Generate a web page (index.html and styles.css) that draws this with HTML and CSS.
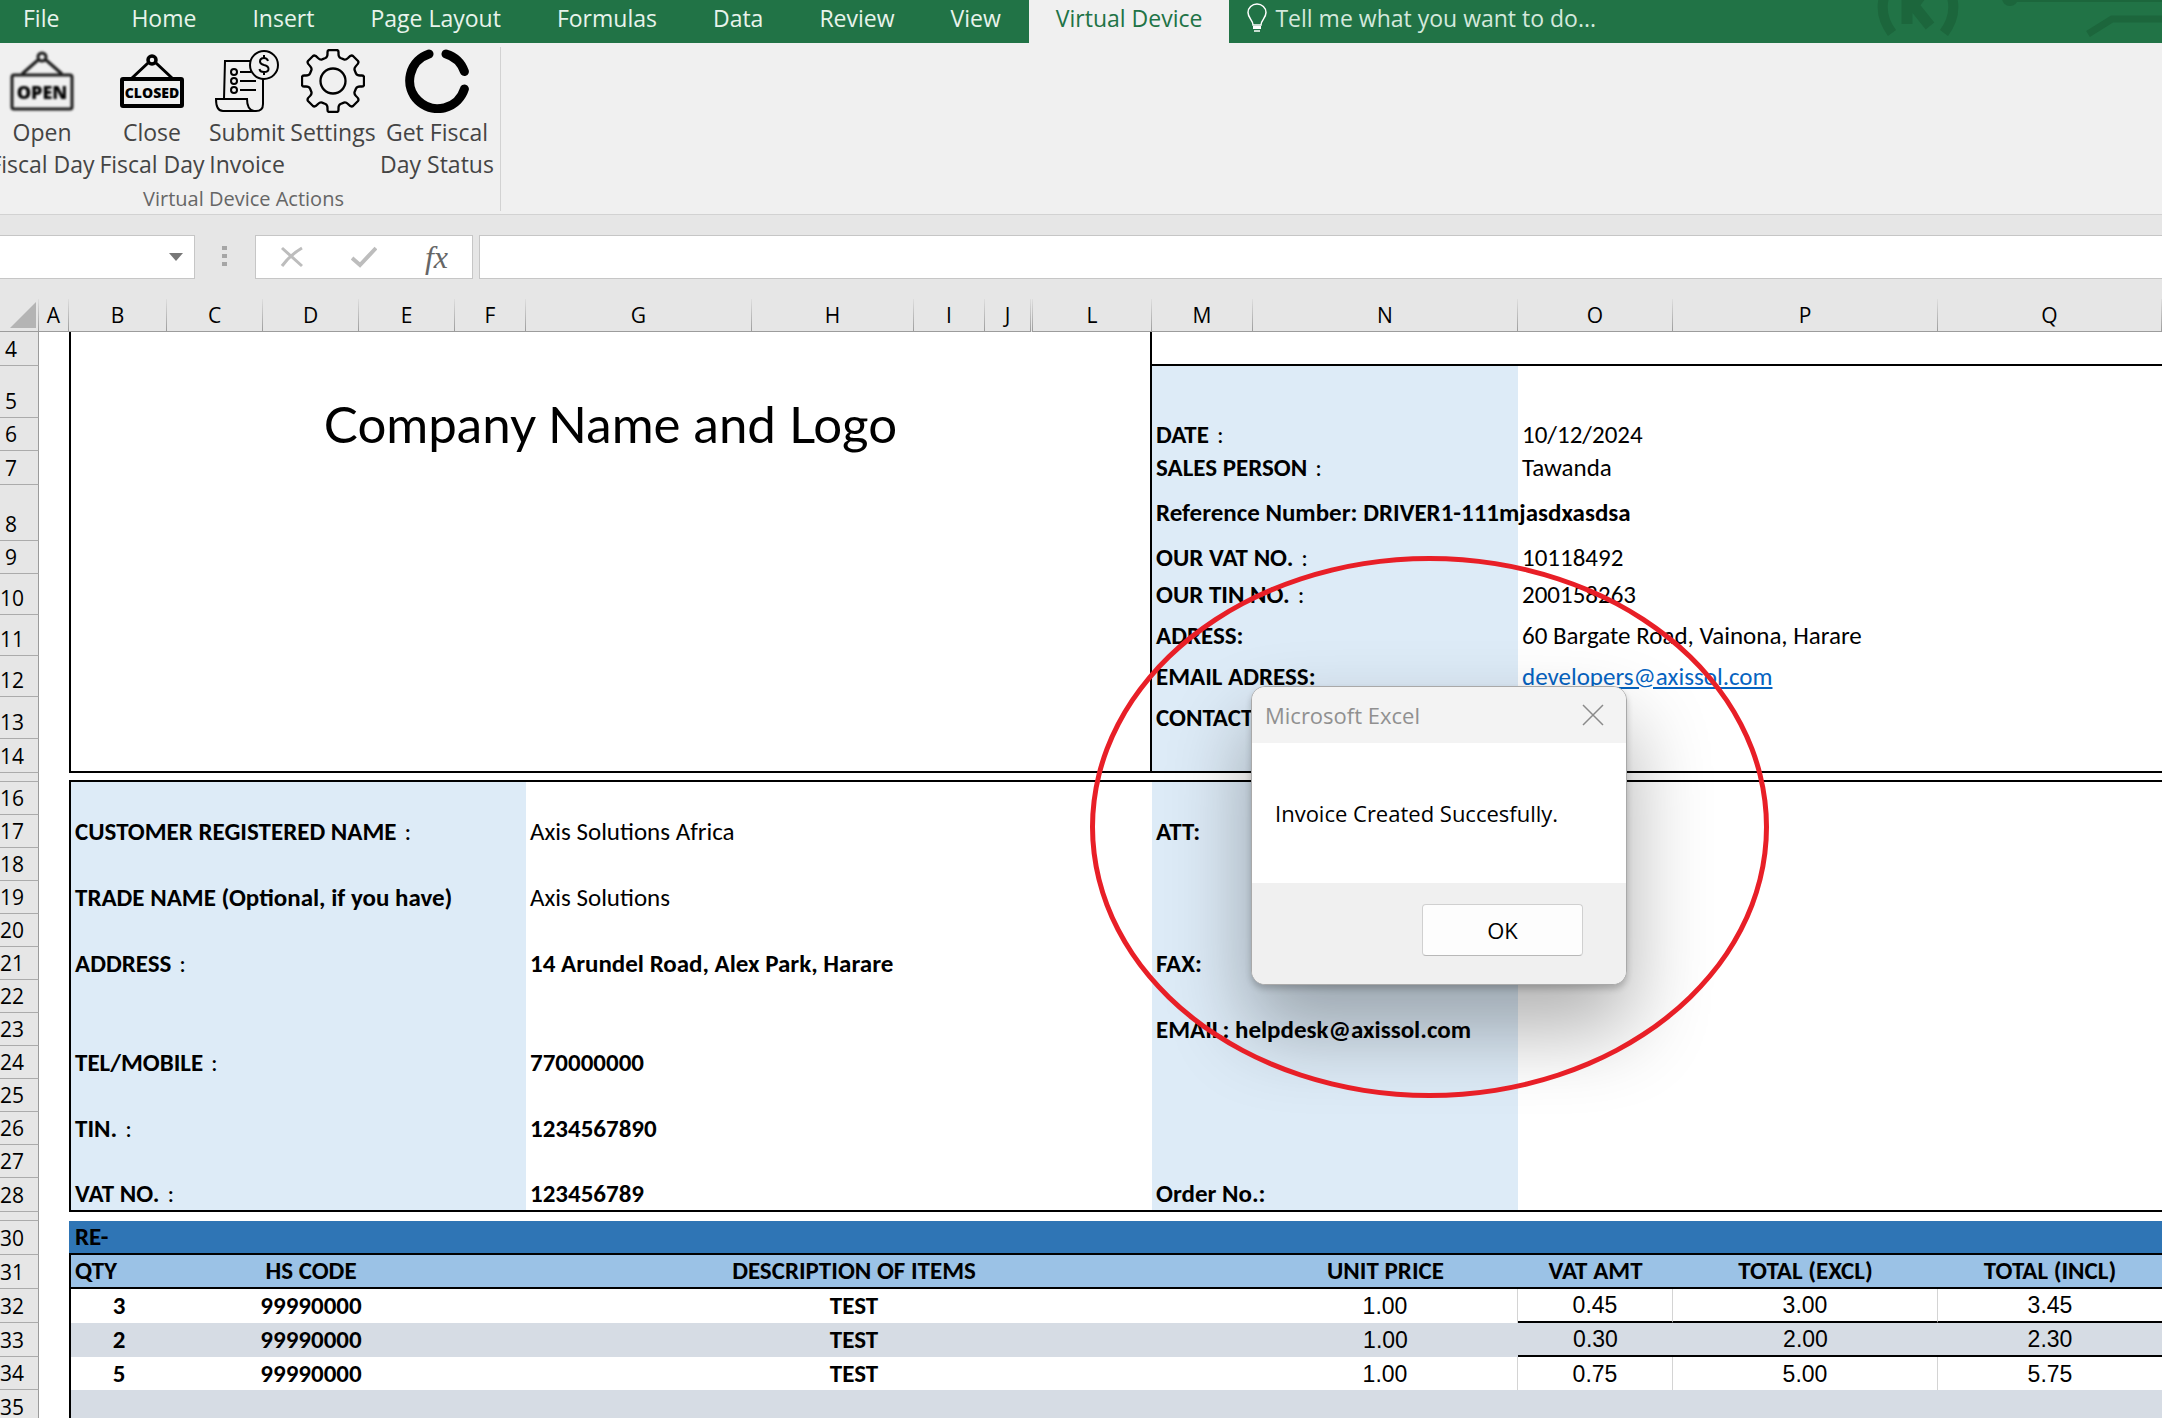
FILE: index.html
```html
<!DOCTYPE html>
<html lang="en">

<head>
    <meta charset="UTF-8">
    <meta name="viewport" content="width=device-width, initial-scale=1.0">
    <title>Invoice - Excel</title>
    <link rel="stylesheet" href="styles.css">
</head>

<body>
    <!-- tabs -->
    <nav class="tabs">
        <a class="file" href="#">File</a>
        <a href="#">Home</a>
        <a href="#">Insert</a>
        <a href="#">Page Layout</a>
        <a href="#">Formulas</a>
        <a href="#">Data</a>
        <a href="#">Review</a>
        <a href="#">View</a>
        <a class="active" href="#">Virtual Device</a>
        <button class="tell-me" type="button">
            <svg width="20" height="30" viewBox="0 0 20 30" fill="none" stroke="#fff" stroke-width="1.5">
                <path d="M6 22C6 17 1 15 1 9.500A9 8.500 0 0 1 19 9.500C19 15 14 17 14 22Z" />
                <path d="M6 24.500H14" stroke-width="3" />
                <path d="M7 28H13" />
            </svg>
            Tell me what you want to do...
        </button>
        <svg class="circuit" width="290" height="43" viewBox="0 0 290 43" fill="none" stroke="#1c663c">
            <path d="M13 -6Q6 14 20 33M79 -6Q86 14 72 33" stroke-width="10" />
            <path d="M35 -6V24M35 10L44 2L50 -6M42 6L58 26" stroke-width="11" />
            <circle cx="138" cy="-2" r="8" fill="#1c663c" stroke="none" />
            <path d="M138 0H290" stroke-width="4" />
            <path d="M216 34L240 19H290" stroke-width="7" />
        </svg>
    </nav>

    <!-- ribbon -->
    <section class="ribbon">
        <div class="group">
            <div class="actions">
                <button type="button">
                    <svg class="icon soft" viewBox="0 0 64 64" fill="none" stroke="#1a1a1a" stroke-width="3">
                        <circle cx="32" cy="8" r="4" />
                        <path d="M28 11L12 25M36 11L52 25" />
                        <rect x="2" y="26" width="60" height="34" rx="2" />
                        <text class="sign-open" x="32" y="50">OPEN</text>
                    </svg>
                    <span>Open<br>Fiscal Day</span>
                </button>
                <button type="button">
                    <svg class="icon" viewBox="0 0 64 64" fill="none" stroke="#000" stroke-width="3">
                        <circle cx="32" cy="11" r="4" stroke-width="3.500" />
                        <path d="M28 14L12 29M36 14L52 29" />
                        <rect x="2" y="30" width="60" height="27" rx="1" stroke-width="4" />
                        <text class="sign-closed" x="32" y="49">CLOSED</text>
                    </svg>
                    <span>Close<br>Fiscal Day</span>
                </button>
                <button type="button">
                    <svg class="icon" viewBox="0 0 64 64" fill="none" stroke="#000" stroke-width="2">
                        <path d="M9 50L10 12H36M48 30V55Q48 62 41 62H8Q1 62 1 50H32Q32 61 39 62" />
                        <circle cx="49" cy="16" r="14" />
                        <circle cx="19" cy="23" r="3" />
                        <circle cx="19" cy="32" r="3" />
                        <circle cx="19" cy="41" r="3" />
                        <path d="M25 23H36M25 32H41M25 41H41" />
                        <path d="M53 12Q52 9 49 9Q45 9 45 12.500Q45 15 49 16Q53.500 17 53.500 20Q53.500 23 49 23Q45 23 44.500 20M49 6V9M49 23V26" />
                    </svg>
                    <span>Submit<br>Invoice</span>
                </button>
                <button type="button">
                    <svg class="icon" viewBox="-32 -32 64 64" fill="none" stroke="#000" stroke-width="2.300" stroke-linejoin="round">
                        <path d="M-7.500-23Q-5.500-24-5.500-27V-29Q-5.500-31-3.500-31H3.500Q5.500-31 5.500-29V-27Q5.500-24 7.500-23L10.960-21.570Q13-21 15-23Q18-26.500 20-25L25-20Q26.500-18 23-15Q21-13 21.570-10.960L23-7.500Q24-5.500 27-5.500H29Q31-5.500 31-3.500V3.500Q31 5.500 29 5.500H27Q24 5.500 23 7.500L21.570 10.960Q21 13 23 15Q26.500 18 25 20L20 25Q18 26.500 15 23Q13 21 10.960 21.570L7.500 23Q5.500 24 5.500 27V29Q5.500 31 3.500 31H-3.500Q-5.500 31-5.500 29V27Q-5.500 24-7.500 23L-10.960 21.570Q-13 21-15 23Q-18 26.500-20 25L-25 20Q-26.500 18-23 15Q-21 13-21.570 10.960L-23 7.500Q-24 5.500-27 5.500H-29Q-31 5.500-31 3.500V-3.500Q-31-5.500-29-5.500H-27Q-24-5.500-23-7.500L-21.570-10.960Q-21-13-23-15Q-26.500-18-25-20L-20-25Q-18-26.500-15-23Q-13-21-10.960-21.570Z" />
                        <circle r="12.500" />
                    </svg>
                    <span>Settings</span>
                </button>
                <button type="button">
                    <svg class="icon" viewBox="0 0 64 64" fill="none" stroke="#000" stroke-width="9" stroke-linecap="round">
                        <path d="M59.400 40A28 28 0 1 1 24 5M41 5A28 28 0 0 1 59.400 22.500" />
                    </svg>
                    <span>Get Fiscal<br>Day Status</span>
                </button>
            </div>
            <p class="group-name">Virtual Device Actions</p>
        </div>
    </section>

    <!-- formula bar -->
    <section class="formula-bar">
        <div class="name-box">
            <input type="text" aria-label="Name box">
            <button type="button" aria-label="Show names">
                <svg width="14" height="8" viewBox="0 0 14 8"><path d="M0 0H14L7 8Z" fill="#777" /></svg>
            </button>
        </div>
        <svg class="grip" width="5" height="22" viewBox="0 0 5 22" fill="#a6a6a6">
            <path d="M0 0H5V4H0ZM0 8H5V12H0ZM0 16H5V20H0Z" />
        </svg>
        <div class="entry">
            <button type="button" aria-label="Cancel">
                <svg width="24" height="22" viewBox="0 0 24 22" fill="none" stroke="#bdbdbd" stroke-width="3">
                    <path d="M2 2L22 20M22 2Q10 9 2 20" />
                </svg>
            </button>
            <button type="button" aria-label="Enter">
                <svg width="26" height="22" viewBox="0 0 26 22" fill="none" stroke="#bdbdbd" stroke-width="4">
                    <path d="M1 12L9 19L25 2" />
                </svg>
            </button>
            <button class="fx" type="button">fx</button>
        </div>
        <input class="formula" type="text" aria-label="Formula">
    </section>

    <!-- sheet -->
    <main class="sheet">
        <table>
            <colgroup>
                <col class="c-head"><col class="c-a"><col class="c-b"><col class="c-std"><col class="c-std">
                <col class="c-std"><col class="c-f"><col class="c-g"><col class="c-h"><col class="c-f">
                <col class="c-j"><col class="c-k"><col class="c-l"><col class="c-m"><col class="c-n">
                <col class="c-o"><col class="c-n"><col>
            </colgroup>
            <thead>
                <tr>
                    <th class="corner">
                        <svg width="26" height="26" viewBox="0 0 26 26"><path d="M26 0V26H0Z" fill="#b4b4b4" /></svg>
                    </th>
                    <th>A</th><th>B</th><th>C</th><th>D</th><th>E</th><th>F</th><th>G</th><th>H</th><th>I</th>
                    <th>J</th><th></th><th>L</th><th>M</th><th>N</th><th>O</th><th>P</th><th>Q</th>
                </tr>
            </thead>
            <tbody>
                <tr class="h34">
                    <th>4</th>
                    <td></td>
                    <td class="logo" colspan="11" rowspan="11">Company Name and Logo</td>
                    <td class="line" colspan="5"></td>
                </tr>
                <tr class="h52">
                    <th>5</th>
                    <td></td>
                    <td class="label" colspan="2"></td>
                    <td colspan="3"></td>
                </tr>
                <tr class="h33">
                    <th>6</th>
                    <td></td>
                    <td class="label" colspan="2">DATE<i>:</i></td>
                    <td colspan="3">10/12/2024</td>
                </tr>
                <tr class="h34">
                    <th>7</th>
                    <td></td>
                    <td class="label" colspan="2">SALES PERSON<i>:</i></td>
                    <td colspan="3">Tawanda</td>
                </tr>
                <tr class="h56">
                    <th>8</th>
                    <td></td>
                    <td class="label" colspan="2">Reference Number: DRIVER1-111mjasdxasdsa</td>
                    <td colspan="3"></td>
                </tr>
                <tr class="h33">
                    <th>9</th>
                    <td></td>
                    <td class="label" colspan="2">OUR VAT NO.<i>:</i></td>
                    <td colspan="3">10118492</td>
                </tr>
                <tr class="h41">
                    <th>10</th>
                    <td></td>
                    <td class="label" colspan="2">OUR TIN NO.<i>:</i></td>
                    <td colspan="3">200158263</td>
                </tr>
                <tr class="h41">
                    <th>11</th>
                    <td></td>
                    <td class="label" colspan="2">ADRESS:</td>
                    <td colspan="3">60 Bargate Road, Vainona, Harare</td>
                </tr>
                <tr class="h41">
                    <th>12</th>
                    <td></td>
                    <td class="label" colspan="2">EMAIL ADRESS:</td>
                    <td colspan="3"><a href="mailto:developers@axissol.com">developers@axissol.com</a></td>
                </tr>
                <tr class="h42">
                    <th>13</th>
                    <td></td>
                    <td class="label" colspan="2">CONTACT</td>
                    <td colspan="3"></td>
                </tr>
                <tr class="h34">
                    <th>14</th>
                    <td></td>
                    <td class="label line" colspan="2"></td>
                    <td class="line" colspan="3"></td>
                </tr>
                <tr class="h9">
                    <th></th>
                    <td></td>
                    <td class="line" colspan="16"></td>
                </tr>

                <!-- customer -->
                <tr class="h33">
                    <th>16</th>
                    <td></td>
                    <td class="label edge" colspan="5"></td>
                    <td colspan="6"></td>
                    <td class="label" colspan="2"></td>
                    <td colspan="3"></td>
                </tr>
                <tr class="h33">
                    <th>17</th>
                    <td></td>
                    <td class="label edge" colspan="5">CUSTOMER REGISTERED NAME<i>:</i></td>
                    <td colspan="6">Axis Solutions Africa</td>
                    <td class="label" colspan="2">ATT:</td>
                    <td colspan="3"></td>
                </tr>
                <tr class="h33">
                    <th>18</th>
                    <td></td>
                    <td class="label edge" colspan="5"></td>
                    <td colspan="6"></td>
                    <td class="label" colspan="2"></td>
                    <td colspan="3"></td>
                </tr>
                <tr class="h33">
                    <th>19</th>
                    <td></td>
                    <td class="label edge" colspan="5">TRADE NAME (Optional, if you have)</td>
                    <td colspan="6">Axis Solutions</td>
                    <td class="label" colspan="2"></td>
                    <td colspan="3"></td>
                </tr>
                <tr class="h33">
                    <th>20</th>
                    <td></td>
                    <td class="label edge" colspan="5"></td>
                    <td colspan="6"></td>
                    <td class="label" colspan="2"></td>
                    <td colspan="3"></td>
                </tr>
                <tr class="h33">
                    <th>21</th>
                    <td></td>
                    <td class="label edge" colspan="5">ADDRESS<i>:</i></td>
                    <td class="bold" colspan="6">14 Arundel Road, Alex Park, Harare</td>
                    <td class="label" colspan="2">FAX:</td>
                    <td colspan="3"></td>
                </tr>
                <tr class="h33">
                    <th>22</th>
                    <td></td>
                    <td class="label edge" colspan="5"></td>
                    <td colspan="6"></td>
                    <td class="label" colspan="2"></td>
                    <td colspan="3"></td>
                </tr>
                <tr class="h33">
                    <th>23</th>
                    <td></td>
                    <td class="label edge" colspan="5"></td>
                    <td colspan="6"></td>
                    <td class="label" colspan="2">EMAIL: helpdesk@axissol.com</td>
                    <td colspan="3"></td>
                </tr>
                <tr class="h33">
                    <th>24</th>
                    <td></td>
                    <td class="label edge" colspan="5">TEL/MOBILE<i>:</i></td>
                    <td class="bold" colspan="6">770000000</td>
                    <td class="label" colspan="2"></td>
                    <td colspan="3"></td>
                </tr>
                <tr class="h33">
                    <th>25</th>
                    <td></td>
                    <td class="label edge" colspan="5"></td>
                    <td colspan="6"></td>
                    <td class="label" colspan="2"></td>
                    <td colspan="3"></td>
                </tr>
                <tr class="h33">
                    <th>26</th>
                    <td></td>
                    <td class="label edge" colspan="5">TIN.<i>:</i></td>
                    <td class="bold" colspan="6">1234567890</td>
                    <td class="label" colspan="2"></td>
                    <td colspan="3"></td>
                </tr>
                <tr class="h33">
                    <th>27</th>
                    <td></td>
                    <td class="label edge" colspan="5"></td>
                    <td colspan="6"></td>
                    <td class="label" colspan="2"></td>
                    <td colspan="3"></td>
                </tr>
                <tr class="h34">
                    <th>28</th>
                    <td></td>
                    <td class="label edge line" colspan="5">VAT NO.<i>:</i></td>
                    <td class="bold line" colspan="6">123456789</td>
                    <td class="label line" colspan="2">Order No.:</td>
                    <td class="line" colspan="3"></td>
                </tr>
                <tr class="h9">
                    <th><div class="clip">29</div></th>
                    <td></td>
                    <td colspan="16"></td>
                </tr>

                <!-- items -->
                <tr class="h34">
                    <th>30</th>
                    <td></td>
                    <td class="band line" colspan="16">RE-</td>
                </tr>
                <tr class="h34 heads">
                    <th>31</th>
                    <td></td>
                    <td class="edge left">QTY</td>
                    <td colspan="3">HS CODE</td>
                    <td colspan="8">DESCRIPTION OF ITEMS</td>
                    <td>UNIT PRICE</td>
                    <td>VAT AMT</td>
                    <td>TOTAL (EXCL)</td>
                    <td>TOTAL (INCL)</td>
                </tr>
                <tr class="h34 item">
                    <th>32</th>
                    <td></td>
                    <td class="edge">3</td>
                    <td colspan="3">99990000</td>
                    <td colspan="8">TEST</td>
                    <td class="num grid">1.00</td>
                    <td class="num grid line">0.45</td>
                    <td class="num grid line">3.00</td>
                    <td class="num line">3.45</td>
                </tr>
                <tr class="h34 item grey">
                    <th>33</th>
                    <td></td>
                    <td class="edge">2</td>
                    <td colspan="3">99990000</td>
                    <td colspan="8">TEST</td>
                    <td class="num">1.00</td>
                    <td class="num line">0.30</td>
                    <td class="num line">2.00</td>
                    <td class="num line">2.30</td>
                </tr>
                <tr class="h33 item">
                    <th>34</th>
                    <td></td>
                    <td class="edge">5</td>
                    <td colspan="3">99990000</td>
                    <td colspan="8">TEST</td>
                    <td class="num grid">1.00</td>
                    <td class="num grid">0.75</td>
                    <td class="num grid">5.00</td>
                    <td class="num">5.75</td>
                </tr>
                <tr class="h34 item grey">
                    <th>35</th>
                    <td></td>
                    <td class="edge" colspan="16"></td>
                </tr>
            </tbody>
        </table>

        <!-- message box -->
        <div class="dialog" role="dialog" aria-labelledby="dialog-title">
            <div class="dialog-head">
                <h1 id="dialog-title">Microsoft Excel</h1>
                <button type="button" aria-label="Close">
                    <svg width="22" height="22" viewBox="0 0 22 22" stroke="#8a8a8a" stroke-width="1.500">
                        <path d="M1 1L21 21M21 1L1 21" />
                    </svg>
                </button>
            </div>
            <p>Invoice Created Succesfully.</p>
            <div class="dialog-foot">
                <button type="button">OK</button>
            </div>
        </div>
        <div class="ring"></div>
    </main>
</body>

</html>
```

FILE: styles.css
```css
* {
    box-sizing: border-box;
}

body {
    margin: 0;
    height: 100vh;
    overflow: hidden;
    background-color: #e6e6e6;
    font-family: "Segoe UI", "Open Sans", sans-serif;
    font-size: 22px;
}

button,
input {
    margin: 0;
    padding: 0;
    border: 0;
    background: none;
    font: inherit;
    color: inherit;
}

svg {
    display: block;
}

/* tabs */
.tabs {
    display: flex;
    height: 43px;
    overflow: hidden;
    background-color: #217346;
    color: #e8f3ec;
    font-size: 23px;
    line-height: 36px;
    white-space: nowrap;
}

.tabs a {
    padding: 0 28px;
    color: inherit;
    text-decoration: none;
}

.tabs a.file {
    padding: 0 44px 0 23px;
}

.tabs a.active {
    padding: 0 27px;
    background-color: #f0f0f0;
    color: #217346;
}

.tell-me {
    display: flex;
    align-items: center;
    gap: 8px;
    height: 36px;
    padding-left: 18px;
    color: #d3e8dc;
}

.circuit {
    margin-left: auto;
}

/* ribbon */
.ribbon {
    height: 172px;
    padding-top: 4px;
    overflow: hidden;
    border-bottom: 1px solid #d2d2d2;
    background-color: #f0f0f0;
    color: #444;
    font-size: 23px;
}

.group {
    width: 519px;
    height: 164px;
    margin-left: -18px;
    padding: 2px 0 0 5px;
    border-right: 1px solid #d2d2d2;
}

.actions {
    display: grid;
    grid-template-columns: 110px 110px 80px 92px 116px;
    height: 136px;
}

.actions button {
    display: flex;
    flex-direction: column;
    align-items: center;
    gap: 3px;
    line-height: 32px;
    white-space: nowrap;
}

.icon {
    width: 64px;
    height: 64px;
}

.icon text {
    fill: #000;
    stroke: none;
    font-weight: 800;
    text-anchor: middle;
}

.soft {
    filter: blur(1px);
}

.sign-open {
    font-size: 18px;
}

.sign-closed {
    font-size: 14px;
}

.group-name {
    margin: 0;
    color: #666;
    font-size: 20px;
    line-height: 28px;
    text-align: center;
}

/* formula bar */
.formula-bar {
    display: flex;
    align-items: center;
    height: 84px;
}

.name-box,
.entry,
.formula {
    height: 44px;
    border: 1px solid #c6c6c6;
    background-color: #fff;
}

.name-box {
    display: flex;
    width: 195px;
    border-left: 0;
}

.name-box input {
    width: 169px;
    padding-left: 8px;
}

.grip {
    margin: 0 28px 0 27px;
}

.entry {
    display: flex;
    align-items: center;
    justify-content: space-between;
    width: 218px;
    margin-right: 6px;
    padding: 0 24px;
}

.fx {
    color: #666;
    font-family: "Liberation Serif", serif;
    font-size: 32px;
    font-style: italic;
    line-height: 40px;
}

.formula {
    flex: 1;
    min-width: 0;
    border-right: 0;
    padding: 0 8px;
}

/* sheet */
.sheet {
    position: relative;
}

table {
    width: 100%;
    min-width: 2100px;
    table-layout: fixed;
    border-spacing: 0;
    background-color: #fff;
    color: #000;
    font-family: Calibri, Carlito, Lato, sans-serif;
    font-size: 25px;
    line-height: 28px;
    white-space: nowrap;
}

.c-head { width: 39px; }
.c-a { width: 30px; }
.c-b { width: 98px; }
.c-std { width: 96px; }
.c-f { width: 71px; }
.c-g { width: 226px; }
.c-h { width: 162px; }
.c-j { width: 46px; }
.c-k { width: 2px; }
.c-l { width: 119px; }
.c-m { width: 101px; }
.c-n { width: 265px; }
.c-o { width: 155px; }

.h9 { height: 9px; }
.h33 { height: 33px; }
.h34 { height: 34px; }
.h41 { height: 41px; }
.h42 { height: 42px; }
.h52 { height: 52px; }
.h56 { height: 56px; }

th {
    padding: 0;
    background-color: #e6e6e6;
    font-family: "Segoe UI", "Open Sans", sans-serif;
    font-size: 21px;
    font-weight: 400;
}

thead th {
    height: 33px;
    border-bottom: 1px solid #9b9b9b;
    border-right: 1px solid;
    border-image: linear-gradient(#e0e0e0, #9b9b9b) 1;
}

.corner svg {
    margin-left: 10px;
}

tbody th {
    padding-right: 16px;
    border-right: 1px solid #9b9b9b;
    border-bottom: 1px solid #ababab;
    vertical-align: bottom;
    line-height: 32px;
}

.clip {
    display: flex;
    align-items: flex-end;
    justify-content: center;
    height: 8px;
    overflow: hidden;
}

td {
    padding: 0 4px;
    vertical-align: middle;
}

td i {
    margin-left: 8px;
    font-style: normal;
    font-weight: 400;
}

td a {
    color: #0563c1;
}

.label {
    background-color: #ddebf7;
    font-weight: 700;
}

.bold {
    font-weight: 700;
}

.edge {
    border-left: 2px solid #000;
}

.line {
    border-bottom: 2px solid #000;
}

.logo {
    padding-top: 64px;
    border: solid #000;
    border-width: 0 2px 2px;
    font-family: "Tempus Sans ITC", Lato, sans-serif;
    font-size: 51px;
    line-height: 56px;
    text-align: center;
    vertical-align: top;
}

.band {
    padding-left: 6px;
    background-color: #2f75b5;
    font-weight: 700;
}

.heads td,
.item td {
    font-weight: 700;
    text-align: center;
}

.heads td:nth-child(n+3) {
    border-bottom: 2px solid #000;
    background-color: #9bc2e6;
}

.heads td.left {
    text-align: left;
}

.item td.num {
    font-family: Arial, "Liberation Sans", sans-serif;
    font-size: 23px;
    font-weight: 400;
}

.item .grid {
    border-right: 1px solid #d4d4d4;
}

.grey td:nth-child(n+3) {
    background-color: #d6dce4;
}

/* message box */
.dialog {
    position: absolute;
    top: 387px;
    left: 1251px;
    width: 376px;
    overflow: hidden;
    border: 1px solid #a9a9a9;
    border-radius: 14px;
    background-color: #fff;
    box-shadow: 0 4px 6px rgba(0, 0, 0, .2), 0 42px 80px 4px rgba(0, 0, 0, .3);
}

.dialog-head {
    display: flex;
    align-items: center;
    justify-content: space-between;
    height: 56px;
    padding: 0 22px 0 13px;
    background-color: #f3f3f3;
    color: #909090;
}

.dialog h1 {
    margin: 0;
    font-size: 22px;
    font-weight: 400;
}

.dialog p {
    margin: 0;
    padding: 55px 23px;
    line-height: 30px;
}

.dialog-foot {
    display: flex;
    justify-content: flex-end;
    padding: 21px 43px 28px;
    background-color: #f0f0f0;
}

.dialog-foot button {
    width: 161px;
    height: 52px;
    border: 1px solid #d0d0d0;
    border-bottom-color: #b8b8b8;
    border-radius: 4px;
    background-color: #fdfdfd;
}

/* highlight around the message */
.ring {
    position: absolute;
    top: 257px;
    left: 1090px;
    width: 679px;
    height: 542px;
    border: 5px solid #e81f27;
    border-radius: 50%;
    pointer-events: none;
}
```
